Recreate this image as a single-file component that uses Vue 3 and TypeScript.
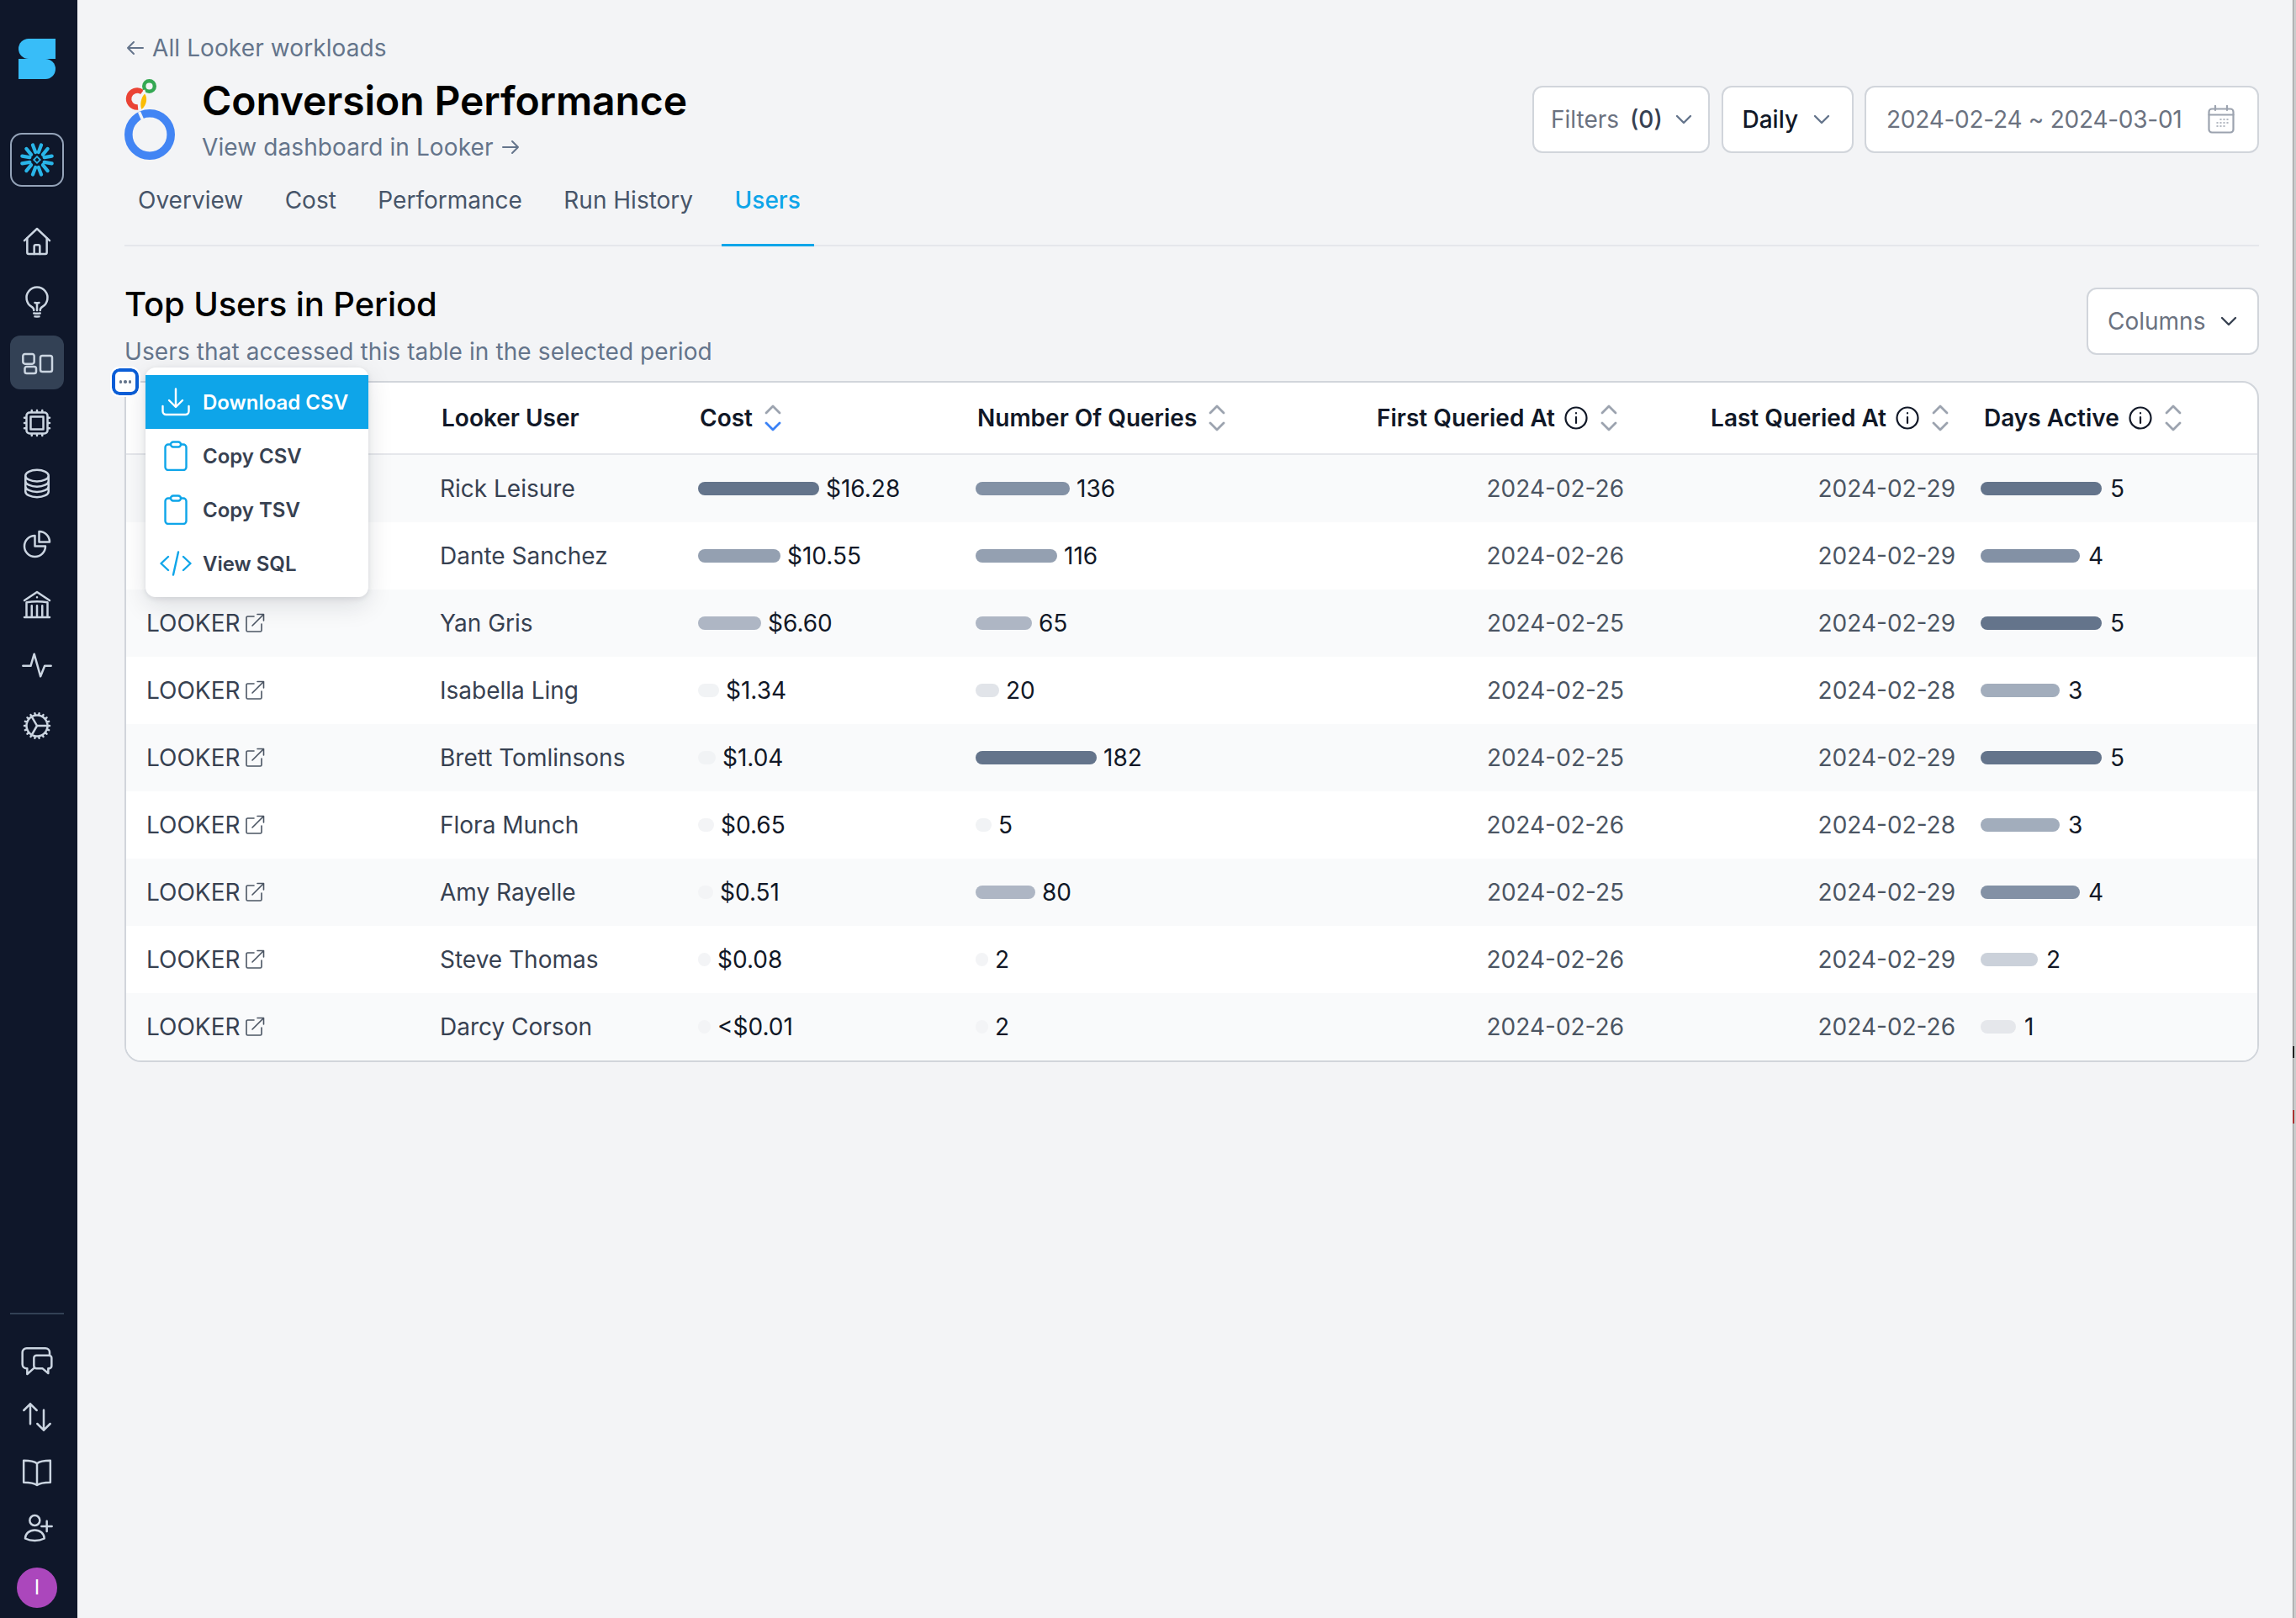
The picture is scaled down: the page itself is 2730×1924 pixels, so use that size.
<script setup lang="ts">
interface Bar { w: number; c: string; v: string }
interface Row { user: string; cost: Bar; queries: Bar; first: string; last: string; days: Bar }

const navIcons: string[][] = [
  ['M3 11.5 12 3l9 8.5', 'M5 9.8V20a1 1 0 0 0 1 1h12a1 1 0 0 0 1-1V9.8', 'M10 21v-5.5a1 1 0 0 1 1-1h2a1 1 0 0 1 1 1V21'],
  ['M12 18v-5.25m0 0a6.01 6.01 0 0 0 1.5-.189m-1.5.189a6.01 6.01 0 0 1-1.5-.189m3.75 7.478a12.06 12.06 0 0 1-4.5 0m3.75 2.383a14.406 14.406 0 0 1-3 0M14.25 18v-.192c0-.983.658-1.823 1.508-2.316a7.5 7.5 0 1 0-7.517 0c.85.493 1.509 1.333 1.509 2.316V18'],
  ['M3.4 6h5.2a1.4 1.4 0 0 1 1.4 1.4v4.2a1.4 1.4 0 0 1-1.4 1.4H3.4A1.4 1.4 0 0 1 2 11.6V7.4A1.4 1.4 0 0 1 3.4 6Z', 'M4.7 15h5.3a1.4 1.4 0 0 1 1.4 1.4v2a1.4 1.4 0 0 1-1.4 1.4H4.7a1.4 1.4 0 0 1-1.4-1.4v-2A1.4 1.4 0 0 1 4.7 15Z', 'M15.8 7.2h5.6a1.4 1.4 0 0 1 1.4 1.4v8.6a1.4 1.4 0 0 1-1.4 1.4h-5.6a1.4 1.4 0 0 1-1.4-1.4V8.6a1.4 1.4 0 0 1 1.4-1.4Z'],
  ['M8.25 3v1.5M4.5 8.25H3m18 0h-1.5M4.5 12H3m18 0h-1.5m-15 3.75H3m18 0h-1.5M8.25 19.5V21M12 3v1.5m0 15V21m3.75-18v1.5m0 15V21m-9-1.5h10.5a2.25 2.25 0 0 0 2.25-2.25V6.75a2.25 2.25 0 0 0-2.25-2.25H6.75A2.25 2.25 0 0 0 4.5 6.75v10.5a2.25 2.25 0 0 0 2.25 2.25Zm.75-12h9v9h-9v-9Z'],
  ['M20.25 6.375c0 2.278-3.694 4.125-8.25 4.125S3.75 8.653 3.75 6.375m16.5 0c0-2.278-3.694-4.125-8.25-4.125S3.75 4.097 3.75 6.375m16.5 0v11.25c0 2.278-3.694 4.125-8.25 4.125s-8.25-1.847-8.25-4.125V6.375m16.5 0v3.75m-16.5-3.75v3.75m16.5 0v3.75C20.25 16.153 16.556 18 12 18s-8.25-1.847-8.25-4.125v-3.75m16.5 0c0 2.278-3.694 4.125-8.25 4.125s-8.25-1.847-8.25-4.125'],
  ['M10.5 6a7.5 7.5 0 1 0 7.5 7.5h-7.5V6Z', 'M13.5 10.5H21A7.5 7.5 0 0 0 13.5 3v7.5Z'],
  ['M12 21v-8.25M15.75 21v-8.25M8.25 21v-8.25M3 9l9-6 9 6m-1.5 12V10.332A48.36 48.36 0 0 0 12 9.75c-2.551 0-5.056.2-7.5.582V21M3 21h18M12 6.75h.008v.008H12V6.75Z'],
  ['M2 12.5h5.5L10 4l4.5 16 3-7.5H22'],
  ['M4.5 12a7.5 7.5 0 0 0 15 0m-15 0a7.5 7.5 0 1 1 15 0m-15 0H3m16.5 0H21m-1.5 0H12m-8.457 3.077 1.41-.513m14.095-5.13 1.41-.513M5.106 17.785l1.15-.964m11.49-9.642 1.149-.964M7.501 19.795l.75-1.3m7.5-12.99.75-1.3m-6.063 16.658.26-1.477m2.605-14.772.26-1.477m0 17.726-.26-1.477M10.698 4.614l-.26-1.477M16.5 19.794l-.75-1.299M7.5 4.205 12 12m6.894 5.785-1.149-.964M6.256 7.178l-1.15-.964m15.352 8.864-1.41-.513M4.954 9.435l-1.41-.514M12.002 12l-3.75 6.495'],
]

const footIcons: string[][] = [
  ['M21 7V5.5a3 3 0 0 0-3-3H4.6a3 3 0 0 0-3 3V14a3 3 0 0 0 3 3H5v4l4.5-4', 'M11.6 7.6h9a1.8 1.8 0 0 1 1.8 1.8v5.8a1.8 1.8 0 0 1-1.8 1.8H20v3.4l-4-3.4h-4.4a1.8 1.8 0 0 1-1.8-1.8V9.4a1.8 1.8 0 0 1 1.8-1.8Z'],
  ['M7.2 17V2.6M2.6 7.2l4.6-4.6 4.6 4.6M16.8 7v14.4M12.2 16.8l4.6 4.6 4.6-4.6'],
  ['M12 5.5C10 4 6 3.5 2.5 3.5V19c3.5 0 7.5.5 9.5 2 2-1.5 6-2 9.5-2V3.5c-3.5 0-7.5.5-9.5 2Zm0 0V21'],
  ['M10.4 3a3.6 3.6 0 1 1 0 7.2 3.6 3.6 0 0 1 0-7.2Z', 'M3.6 19.5c0-3.5 3-6 6.8-6s6.8 2.5 6.8 6c-2 1-4.5 1.5-6.8 1.5s-4.8-.5-6.8-1.5Z', 'M15.2 10.8h7.4M19 7v7.4'],
]

const tabs = ['Overview', 'Cost', 'Performance', 'Run History', 'Users']
const flakeArms = [0, 60, 120, 180, 240, 300]

const bar = (w: number, c: string, v: string): Bar => ({ w, c, v })
const rows: Row[] = [
  { user: 'Rick Leisure', cost: bar(144, '#64748b', '$16.28'), queries: bar(112, '#8391a5', '136'), first: '2024-02-26', last: '2024-02-29', days: bar(144, '#64748b', '5') },
  { user: 'Dante Sanchez', cost: bar(98, '#94a0b1', '$10.55'), queries: bar(97, '#94a0b1', '116'), first: '2024-02-26', last: '2024-02-29', days: bar(118, '#8391a5', '4') },
  { user: 'Yan Gris', cost: bar(75, '#aeb6c4', '$6.60'), queries: bar(67, '#aeb6c4', '65'), first: '2024-02-25', last: '2024-02-29', days: bar(144, '#64748b', '5') },
  { user: 'Isabella Ling', cost: bar(25, '#f1f3f5', '$1.34'), queries: bar(28, '#e1e4e9', '20'), first: '2024-02-25', last: '2024-02-28', days: bar(94, '#a2adbc', '3') },
  { user: 'Brett Tomlinsons', cost: bar(21, '#f1f3f5', '$1.04'), queries: bar(144, '#64748b', '182'), first: '2024-02-25', last: '2024-02-29', days: bar(144, '#64748b', '5') },
  { user: 'Flora Munch', cost: bar(19, '#f3f4f6', '$0.65'), queries: bar(19, '#f1f3f5', '5'), first: '2024-02-26', last: '2024-02-28', days: bar(94, '#a2adbc', '3') },
  { user: 'Amy Rayelle', cost: bar(18, '#f3f4f6', '$0.51'), queries: bar(71, '#aeb6c4', '80'), first: '2024-02-25', last: '2024-02-29', days: bar(118, '#8391a5', '4') },
  { user: 'Steve Thomas', cost: bar(15, '#f3f4f6', '$0.08'), queries: bar(15, '#f3f4f6', '2'), first: '2024-02-26', last: '2024-02-29', days: bar(68, '#cbd1da', '2') },
  { user: 'Darcy Corson', cost: bar(15, '#f3f4f6', '<$0.01'), queries: bar(15, '#f3f4f6', '2'), first: '2024-02-26', last: '2024-02-26', days: bar(42, '#e5e7eb', '1') },
]
</script>

<template>
  <div class="app">
    <aside class="sidebar">
      <svg class="brand" viewBox="0 0 44 48" width="44" height="48">
        <path fill="#38bdf8" d="M12 0H44V24H12A12 12 0 0 1 12 0Z" />
        <path fill="#38bdf8" d="M0 24H32A12 12 0 0 1 32 48H0Z" />
      </svg>
      <div class="warehouse">
        <svg viewBox="-20 -20 40 40" width="40" height="40">
          <g v-for="a in flakeArms" :key="a" :transform="`rotate(${a})`" fill="none" stroke="#29b5e8" stroke-width="4.2" stroke-linecap="round">
            <path d="M-5 -17.500 -1.800 -9" />
            <path d="M5 -17.500 1.800 -9" />
          </g>
          <path d="M0 -3.800 3.800 0 0 3.800 -3.800 0Z" fill="none" stroke="#29b5e8" stroke-width="1.800" />
        </svg>
      </div>
      <nav class="nav">
        <a v-for="(icon, i) in navIcons" :key="i" class="nav-item" :class="{ active: i === 2 }">
          <svg viewBox="0 0 24 24" width="40" height="40" fill="none" stroke="#cbd5e1" stroke-width="1.5" stroke-linecap="round" stroke-linejoin="round">
            <path v-for="d in icon" :key="d" :d="d" />
          </svg>
        </a>
      </nav>
      <div class="foot">
        <div class="foot-line"></div>
        <a v-for="(icon, i) in footIcons" :key="i" class="foot-item">
          <svg viewBox="0 0 24 24" width="40" height="40" fill="none" stroke="#cbd5e1" stroke-width="1.5" stroke-linecap="round" stroke-linejoin="round">
            <path v-for="d in icon" :key="d" :d="d" />
          </svg>
        </a>
        <div class="avatar">I</div>
      </div>
    </aside>

    <main class="main">
      <a class="back">
        <svg viewBox="0 0 24 24" width="24" height="24" fill="none" stroke="#64748b" stroke-width="2" stroke-linecap="round" stroke-linejoin="round">
          <path d="M21 12H3M10 5l-7 7 7 7" />
        </svg>
        All Looker workloads
      </a>

      <div class="head">
        <svg class="looker" viewBox="148 94 60 96" width="60" height="96">
          <circle cx="178" cy="160" r="25.2" fill="none" stroke="#4285f4" stroke-width="9.6" />
          <path d="M169 109.5A10 10 0 1 0 164 127.5" fill="none" stroke="#ea4335" stroke-width="6.5" />
          <circle cx="177.5" cy="102.5" r="6.3" fill="none" stroke="#34a853" stroke-width="4.4" />
          <path d="M172 111.5C175.5 116 175 124 168.5 130C166 125 167.500 116 172 111.5Z" fill="#fbbc04" />
          <path d="M165.500 133 172 148" fill="none" stroke="#f3f4f6" stroke-width="3.4" />
          <path d="M172 110 171 107" fill="none" stroke="#f3f4f6" stroke-width="2.500" />
        </svg>
        <div class="head-text">
          <h1>Conversion Performance</h1>
          <a class="head-link">View dashboard in Looker
            <svg viewBox="0 0 24 24" width="24" height="24" fill="none" stroke="#64748b" stroke-width="2" stroke-linecap="round" stroke-linejoin="round">
              <path d="M3 12h18M14 5l7 7-7 7" />
            </svg>
          </a>
        </div>
        <div class="tools">
          <button class="tool filters">
            <span>Filters</span><b>(0)</b>
            <svg class="chev" viewBox="0 0 20 12" width="20" height="12"><path d="M2 2l8 8 8-8" /></svg>
          </button>
          <button class="tool daily">
            <span>Daily</span>
            <svg class="chev" viewBox="0 0 20 12" width="20" height="12"><path d="M2 2l8 8 8-8" /></svg>
          </button>
          <button class="tool dates">
            <span>2024-02-24 ~ 2024-03-01</span>
            <svg viewBox="0 0 32 34" width="32" height="34" fill="none" stroke="#9ca3af" stroke-width="2.200" stroke-linecap="round">
              <rect x="1.500" y="4.500" width="29" height="28" rx="3.500" />
              <path d="M1.500 11.500h29M9 1v5M23 1v5" />
              <path d="M15 17h1M19 17h1M23 17h1M11 21h1M15 21h1M19 21h1M23 21h1M11 25h1M15 25h1M19 25h1" stroke-width="1.500" />
            </svg>
          </button>
        </div>
      </div>

      <div class="tabs">
        <a v-for="t in tabs" :key="t" class="tab" :class="{ current: t === 'Users' }">{{ t }}</a>
      </div>

      <div class="section-head">
        <div>
          <h2>Top Users in Period</h2>
          <p>Users that accessed this table in the selected period</p>
        </div>
        <button class="tool columns">
          <span>Columns</span>
          <svg class="chev dark" viewBox="0 0 20 12" width="20" height="12"><path d="M2 2l8 8 8-8" /></svg>
        </button>
      </div>

      <div class="table-wrap">
        <div class="table">
          <div class="tr thead">
            <div class="th"></div>
            <div class="th pad">Looker User</div>
            <div class="th pad">Cost
              <svg class="sort" viewBox="0 0 20 32" width="20" height="32">
                <path d="M2 10l8-8 8 8" stroke="#9ca3af" />
                <path d="M2 22l8 8 8-8" stroke="#3b82f6" />
              </svg>
            </div>
            <div class="th pad">Number Of Queries
              <svg class="sort" viewBox="0 0 20 32" width="20" height="32">
                <path d="M2 10l8-8 8 8" stroke="#9ca3af" />
                <path d="M2 22l8 8 8-8" stroke="#9ca3af" />
              </svg>
            </div>
            <div class="th end e1">First Queried At
              <svg class="info" viewBox="0 0 28 28" width="28" height="28"><circle cx="14" cy="14" r="12.500" /><path d="M14 13v7M14 8v.5" /></svg>
              <svg class="sort" viewBox="0 0 20 32" width="20" height="32">
                <path d="M2 10l8-8 8 8" stroke="#9ca3af" />
                <path d="M2 22l8 8 8-8" stroke="#9ca3af" />
              </svg>
            </div>
            <div class="th end e2">Last Queried At
              <svg class="info" viewBox="0 0 28 28" width="28" height="28"><circle cx="14" cy="14" r="12.500" /><path d="M14 13v7M14 8v.5" /></svg>
              <svg class="sort" viewBox="0 0 20 32" width="20" height="32">
                <path d="M2 10l8-8 8 8" stroke="#9ca3af" />
                <path d="M2 22l8 8 8-8" stroke="#9ca3af" />
              </svg>
            </div>
            <div class="th days">Days Active
              <svg class="info" viewBox="0 0 28 28" width="28" height="28"><circle cx="14" cy="14" r="12.500" /><path d="M14 13v7M14 8v.5" /></svg>
              <svg class="sort" viewBox="0 0 20 32" width="20" height="32">
                <path d="M2 10l8-8 8 8" stroke="#9ca3af" />
                <path d="M2 22l8 8 8-8" stroke="#9ca3af" />
              </svg>
            </div>
          </div>

          <div v-for="r in rows" :key="r.user" class="tr">
            <div class="td source">LOOKER
              <svg viewBox="0 0 24 24" width="24" height="24" fill="none" stroke="#4b5563" stroke-width="1.600" stroke-linecap="round" stroke-linejoin="round">
                <path d="M11 4H3.500A1.500 1.500 0 0 0 2 5.500v15A1.500 1.500 0 0 0 3.500 22h15a1.500 1.500 0 0 0 1.500-1.500V13" />
                <path d="M9 15 22.500 1.500M15 1.500h7.500V9" />
              </svg>
            </div>
            <div class="td">{{ r.user }}</div>
            <div class="td value">
              <i class="bar" :style="{ width: r.cost.w + 'px', background: r.cost.c }"></i>{{ r.cost.v }}
            </div>
            <div class="td value">
              <i class="bar" :style="{ width: r.queries.w + 'px', background: r.queries.c }"></i>{{ r.queries.v }}
            </div>
            <div class="td date">{{ r.first }}</div>
            <div class="td date">{{ r.last }}</div>
            <div class="td value day">
              <i class="bar" :style="{ width: r.days.w + 'px', background: r.days.c }"></i>{{ r.days.v }}
            </div>
          </div>
        </div>

        <button class="dots"><i></i><i></i><i></i></button>

        <div class="menu">
          <a class="menu-item on">
            <svg viewBox="0 0 34 34" width="34" height="34" fill="none" stroke="#fff" stroke-width="2.400" stroke-linecap="round" stroke-linejoin="round">
              <path d="M17 1.500v21M9 15l8 8 8-8M1.500 22v6a4 4 0 0 0 4 4h23a4 4 0 0 0 4-4v-6" />
            </svg>
            Download CSV
          </a>
          <a class="menu-item">
            <svg viewBox="0 0 34 36" width="34" height="36" fill="none" stroke="#0ea5e9" stroke-width="2.400" stroke-linejoin="round">
              <path d="M11 4.500H8a3.500 3.500 0 0 0-3.500 3.500v23.500A3.500 3.500 0 0 0 8 35h18a3.500 3.500 0 0 0 3.500-3.500V8A3.500 3.500 0 0 0 26 4.500h-3" />
              <rect x="11" y="1.500" width="12" height="6" rx="3" />
            </svg>
            Copy CSV
          </a>
          <a class="menu-item">
            <svg viewBox="0 0 34 36" width="34" height="36" fill="none" stroke="#0ea5e9" stroke-width="2.400" stroke-linejoin="round">
              <path d="M11 4.500H8a3.500 3.500 0 0 0-3.500 3.500v23.500A3.500 3.500 0 0 0 8 35h18a3.500 3.500 0 0 0 3.500-3.500V8A3.500 3.500 0 0 0 26 4.500h-3" />
              <rect x="11" y="1.500" width="12" height="6" rx="3" />
            </svg>
            Copy TSV
          </a>
          <a class="menu-item">
            <svg viewBox="0 0 38 30" width="38" height="30" fill="none" stroke="#0ea5e9" stroke-width="2.400" stroke-linecap="round" stroke-linejoin="round">
              <path d="M10 7 1.500 15 10 23M28 7l8.500 8-8.500 8M22 1.500 16 28.500" />
            </svg>
            View SQL
          </a>
        </div>
      </div>
    </main>

    <div class="edge"><i class="mark-a"></i><i class="mark-b"></i></div>
  </div>
</template>

<style scoped>
.app {
  display: flex;
  height: 1924px;
  overflow: hidden;
  background: #f3f4f6;
  color: #374151;
  font-family: Inter, "Noto Sans", sans-serif;
  font-size: 28px;
}

.sidebar {
  flex: none;
  width: 92px;
  box-sizing: border-box;
  padding: 46px 4px 12px 0;
  background: #0f172a;
  display: flex;
  flex-direction: column;
  align-items: center;
}

.warehouse {
  width: 64px;
  height: 64px;
  box-sizing: border-box;
  margin-top: 64px;
  border: 2px solid #94a3b8;
  border-radius: 14px;
  display: flex;
  align-items: center;
  justify-content: center;
}

.nav {
  margin-top: 33px;
  display: flex;
  flex-direction: column;
  gap: 8px;
}

.nav-item {
  width: 64px;
  height: 64px;
  border-radius: 12px;
  display: flex;
  align-items: center;
  justify-content: center;
}

.nav-item.active {
  background: #334155;
}

.foot {
  margin-top: auto;
  display: flex;
  flex-direction: column;
  align-items: center;
}

.foot-line {
  width: 64px;
  height: 2px;
  background: #334155;
  margin-bottom: 32px;
}

.foot-item {
  height: 48px;
  margin-bottom: 18px;
  display: flex;
  align-items: center;
}

.avatar {
  width: 48px;
  height: 48px;
  margin-top: 5px;
  border-radius: 50%;
  background: #ab47bc;
  color: #fff;
  font-size: 24px;
  line-height: 48px;
  text-align: center;
}

.main {
  flex: 1;
  min-width: 0;
  box-sizing: border-box;
  padding: 38px 40px 0 56px;
}

.back {
  display: flex;
  align-items: center;
  gap: 8px;
  height: 38px;
  color: #64748b;
  letter-spacing: 0.1px;
}

.back svg {
  margin-left: 1px;
}

.head {
  margin-top: 18px;
  height: 100px;
  display: flex;
}

.looker {
  flex: none;
  margin-right: 32px;
}

.head-text {
  flex: 1;
}

.head-text h1 {
  margin: 0;
  height: 52px;
  color: #000;
  font-size: 48px;
  font-weight: 600;
  letter-spacing: -0.1px;
  line-height: 52px;
}

.head-link {
  display: flex;
  align-items: center;
  gap: 8px;
  height: 34px;
  margin-top: 12px;
  color: #64748b;
  letter-spacing: 0.1px;
}

.tools {
  display: flex;
  gap: 13.500px;
  padding-top: 8px;
}

.tool {
  height: 80px;
  box-sizing: border-box;
  display: flex;
  align-items: center;
  background: #fff;
  border: 2px solid #d1d5db;
  border-radius: 12px;
  font: inherit;
  color: #6b7280;
}

.filters {
  width: 211px;
  padding: 0 0 0 20px;
}

.filters b {
  margin-left: 13px;
  color: #374151;
  font-weight: 500;
}

.filters .chev {
  margin-left: 15px;
}

.daily {
  width: 157px;
  padding: 0 0 0 23px;
  color: #111827;
  font-weight: 500;
}

.daily .chev {
  margin-left: 18px;
}

.dates {
  width: 469px;
  padding: 0 0 0 24px;
  letter-spacing: -0.25px;
}

.dates svg {
  margin-left: 30px;
}

.chev {
  fill: none;
  stroke: #64748b;
  stroke-width: 2.400;
  stroke-linecap: round;
  stroke-linejoin: round;
}

.chev.dark {
  stroke: #374151;
}

.tabs {
  display: flex;
  gap: 17.500px;
  height: 97px;
  border-bottom: 2px solid #e5e7eb;
}

.tab {
  padding: 27px 16px 0;
  height: 97px;
  box-sizing: border-box;
  line-height: 34px;
  color: #475569;
}

.tab.current {
  height: 99px;
  color: #0ea5e9;
  border-bottom: 3px solid #0ea5e9;
  font-weight: 500;
}

.section-head {
  display: flex;
  justify-content: space-between;
  padding-top: 45px;
}

.section-head h2 {
  margin: 0;
  color: #000;
  font-size: 40px;
  font-weight: 500;
  letter-spacing: -0.1px;
  line-height: 48px;
}

.section-head p {
  margin: 15px 0 0;
  color: #64748b;
  letter-spacing: 0.1px;
  line-height: 34px;
}

.columns {
  width: 205px;
  height: 80px;
  padding: 0 0 0 23px;
  margin-top: 4px;
}

.columns .chev {
  margin-left: 18px;
}

.table-wrap {
  position: relative;
  margin-top: 18px;
}

.table {
  box-sizing: border-box;
  background: #fff;
  border: 2px solid #d1d5db;
  border-radius: 20px;
  overflow: hidden;
}

.tr {
  display: grid;
  grid-template-columns: 373px 307px 330px 400px 371px 394px 1fr;
  height: 80px;
}

.tr:nth-child(even) {
  background: #f9fafb;
}

.thead {
  height: 86px;
  box-sizing: border-box;
  border-bottom: 2px solid #e5e7eb;
}

.th {
  display: flex;
  align-items: center;
  color: #111827;
  font-weight: 600;
  white-space: nowrap;
}

.th.pad {
  padding-left: 2px;
}

.th.end {
  justify-content: flex-end;
}

.e1 {
  padding-right: 8px;
}

.e2 {
  padding-right: 8px;
}

.th.days {
  padding-left: 34px;
}

.sort {
  margin-left: 14px;
  fill: none;
  stroke-width: 2.800;
  stroke-linecap: round;
  stroke-linejoin: round;
}

.info {
  margin-left: 11px;
  fill: none;
  stroke: #111827;
  stroke-width: 2.200;
  stroke-linecap: round;
}

.info + .sort {
  margin-left: 15px;
}

.td {
  display: flex;
  align-items: center;
  color: #374151;
}

.source {
  padding-left: 24px;
  gap: 5px;
}

.value {
  color: #111827;
  white-space: nowrap;
}

.day {
  padding-left: 30px;
}

.day .bar {
  margin-right: 10px;
}

.bar {
  height: 16px;
  border-radius: 8px;
  margin-right: 8px;
}

.date {
  justify-content: flex-end;
  color: #4b5563;
}

.dots {
  position: absolute;
  left: -15px;
  top: -15px;
  width: 32px;
  height: 32px;
  box-sizing: border-box;
  padding: 0;
  display: flex;
  align-items: center;
  justify-content: center;
  gap: 2px;
  background: #fff;
  border: 4px solid #0b5ed7;
  border-radius: 9px;
  outline: 2px solid #fff;
}

.dots i {
  width: 3.500px;
  height: 3.500px;
  border-radius: 50%;
  background: #64748b;
}

.menu {
  position: absolute;
  left: 25px;
  top: -16px;
  width: 265px;
  height: 273px;
  box-sizing: border-box;
  padding-top: 9px;
  background: #fff;
  border-radius: 12px;
  box-shadow: 0 10px 30px rgba(15, 23, 42, 0.12), 0 2px 6px rgba(15, 23, 42, 0.1);
}

.menu-item {
  height: 64px;
  display: flex;
  align-items: center;
  font-size: 24px;
  font-weight: 600;
  color: #374151;
}

.menu-item svg {
  flex: none;
  margin-left: 19px;
  margin-right: 15px;
}

.menu-item:last-child svg {
  margin-left: 17px;
  margin-right: 13px;
}

.menu-item.on {
  background: #0ea5e9;
  color: #fff;
}

.edge {
  flex: none;
  position: relative;
  width: 4px;
  box-sizing: border-box;
  background: #cacbcc;
  border-left: 1px solid #98999a;
}

.edge i {
  position: absolute;
  left: -1px;
  width: 2px;
}

.mark-a {
  top: 1244px;
  height: 14px;
  background: #222;
}

.mark-b {
  top: 1320px;
  height: 16px;
  background: #a33;
}
</style>

<style>
html,
body {
  margin: 0;
  background: #f3f4f6;
}
</style>
